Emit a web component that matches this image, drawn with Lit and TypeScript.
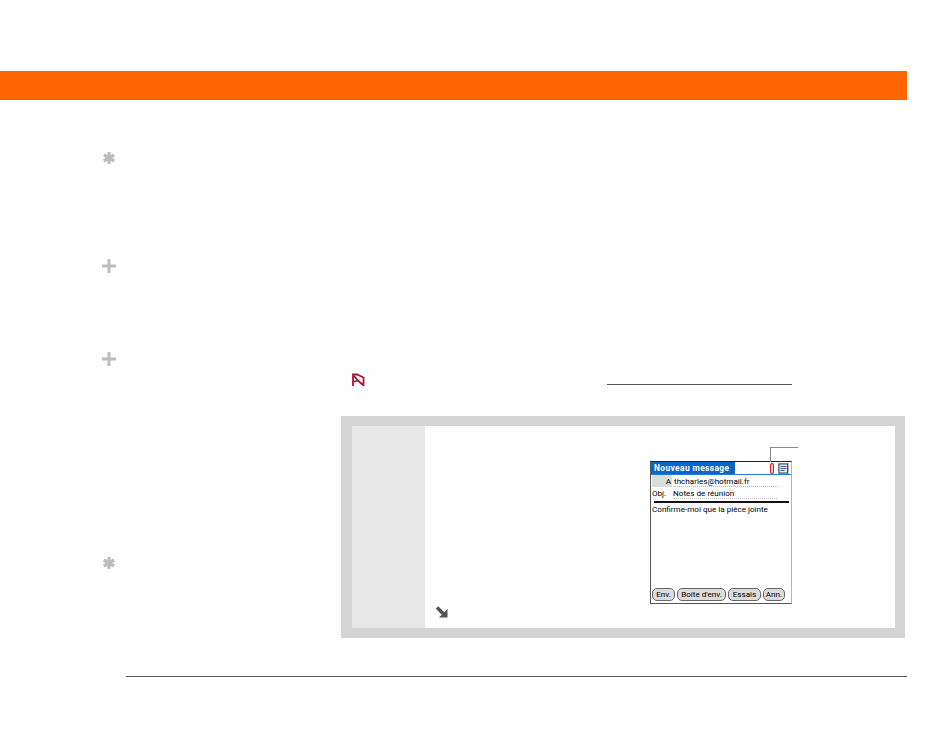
import { LitElement, html, css, svg } from "lit";
import { customElement } from "lit/decorators.js";

const asterisk = svg`<svg class="ic" width="14" height="14" viewBox="0 0 14 14"><g stroke="#bdbdbd" stroke-width="3.2" fill="none"><path d="M7 1v12M1.800 4l10.400 6M1.800 10l10.400-6"/></g></svg>`;
const plus = svg`<svg class="ic" width="14" height="14" viewBox="0 0 14 14"><path d="M7 0v14M0 7h14" stroke="#bdbdbd" stroke-width="3" fill="none"/></svg>`;

@customElement("app-root")
export class AppRoot extends LitElement {
  static styles = css`
    :host { display: block; width: 950px; height: 734px; background: #fff; font-family: Roboto, sans-serif; overflow: hidden; }
    .bar { margin-top: 71px; height: 29px; width: 907px; background: #ff6600; }
    .page { display: flex; height: 576px; }
    .rail { width: 116px; flex: none; display: flex; flex-direction: column; padding-left: 102px; box-sizing: border-box; }
    .ic { display: block; }
    .r1 { margin-top: 51px; }
    .r2 { margin-top: 94px; }
    .r3 { margin-top: 79px; }
    .r4 { margin-top: 190px; }
    .main { margin-left: 225px; width: 564px; }
    .note { display: flex; align-items: flex-start; height: 316px; padding-top: 273px; box-sizing: border-box; }
    .flag { margin-left: 11px; display: block; }
    .rule { margin-left: 242px; margin-top: 11px; width: 185px; height: 1px; background: #555; }
    .table { height: 222px; box-sizing: border-box; border: solid #d4d4d4; border-width: 10px 10px 10px 11px; display: flex; }
    .side { width: 73px; background: #e8e8e8; flex: none; }
    .cell { flex: 1; background: #fff; position: relative; padding: 35px 0 0 225px; }
    .arrow { position: absolute; left: 11px; top: 180px; display: block; }
    .callout { position: absolute; left: 345px; top: 21px; width: 28px; height: 15px; border: solid #888; border-width: 1px 0 0 1px; box-sizing: border-box; }
    .device { width: 142px; height: 143px; box-sizing: border-box; border: 1px solid #b4b4b4; border-left-color: #555; border-bottom-color: #555; border-top-color: #222; display: flex; flex-direction: column; font-size: 8.1px; line-height: 12px; color: #000; }
    .title { display: flex; align-items: center; height: 12px; border-bottom: 1px solid #2a7ad0; flex: none; }
    .title b { background: #0a66c8; color: #fff; width: 84px; height: 12px; padding-left: 3px; box-sizing: border-box; font-size: 8.4px; letter-spacing: .4px; line-height: 12px; white-space: nowrap; flex: none; }
    .clip { display: block; margin-left: 35px; }
    .doc { display: block; margin-left: 4px; }
    .row { display: flex; height: 12px; flex: none; }
    .sel { width: 20px; margin-left: 1px; background: #dcdcdc; text-align: right; padding-right: 1px; box-sizing: border-box; }
    .lab { width: 19px; margin-left: 1px; }
    .val { margin-left: 2px; width: 104px; border-bottom: 1px dotted #bbb; height: 11px; white-space: nowrap; }
    .heavy { height: 2px; background: #111; margin: 2px 2px 0 3px; flex: none; }
    .body { padding-left: 1px; height: 85px; white-space: nowrap; line-height: 12px; flex: none; }
    .btns { display: flex; gap: 2px; padding-left: 1px; }
    .btns span { box-sizing: border-box; height: 13px; border: 1px solid #666; border-radius: 5px; background: #dcdcdc; text-align: center; line-height: 11px; white-space: nowrap; font-size: 8.1px; }
    .foot { margin-left: 126px; width: 781px; height: 1px; background: #555; }
  `;

  render() {
    return html`
      <div class="bar"></div>
      <div class="page">
        <div class="rail">
          <div class="r1">${asterisk}</div>
          <div class="r2">${plus}</div>
          <div class="r3">${plus}</div>
          <div class="r4">${asterisk}</div>
        </div>
        <div class="main">
          <div class="note">
            <svg class="flag" width="13" height="13" viewBox="0 0 13 13"><path d="M1 13V1.500H5L11.500 4.500V12.500L6 7.500 2 3M1 9L6 7.500" fill="none" stroke="#a8152f" stroke-width="1.800"/></svg>
            <div class="rule"></div>
          </div>
          <div class="table">
            <div class="side"></div>
            <div class="cell">
              <div class="callout"></div>
              <div class="device">
                <div class="title"><b>Nouveau message</b>
                  <svg class="clip" width="4" height="11" viewBox="0 0 4 11"><rect x=".6" y=".6" width="2.800" height="9.800" rx="1.400" fill="#fff" stroke="#d8202c" stroke-width="1.200"/></svg>
                  <svg class="doc" width="11" height="11" viewBox="0 0 11 11"><rect width="11" height="11" fill="#bdbdbd"/><rect x="1" y="1" width="8.500" height="9" fill="#e8eef4" stroke="#444"/><path d="M2.500 3.500h6M2.500 5.500h6M2.500 7.500h4" stroke="#2f5f92"/></svg>
                </div>
                <div class="row"><span class="sel">A</span><span class="val">thcharles@hotmail.fr</span></div>
                <div class="row"><span class="lab">Obj.</span><span class="val">Notes de réunion</span></div>
                <div class="heavy"></div>
                <div class="body">Confirme-moi que la pièce jointe</div>
                <div class="btns">
                  <span style="width:23px">Env.</span>
                  <span style="width:49px">Boîte d'env.</span>
                  <span style="width:33px">Essais</span>
                  <span style="width:22px">Ann.</span>
                </div>
              </div>
              <svg class="arrow" width="12" height="12" viewBox="0 0 12 12"><path d="M1 1.500l8 8" stroke="#555" stroke-width="3.500" fill="none"/><path d="M11.500 3v8.500H3z" fill="#555"/></svg>
            </div>
          </div>
        </div>
      </div>
      <div class="foot"></div>
    `;
  }
}
